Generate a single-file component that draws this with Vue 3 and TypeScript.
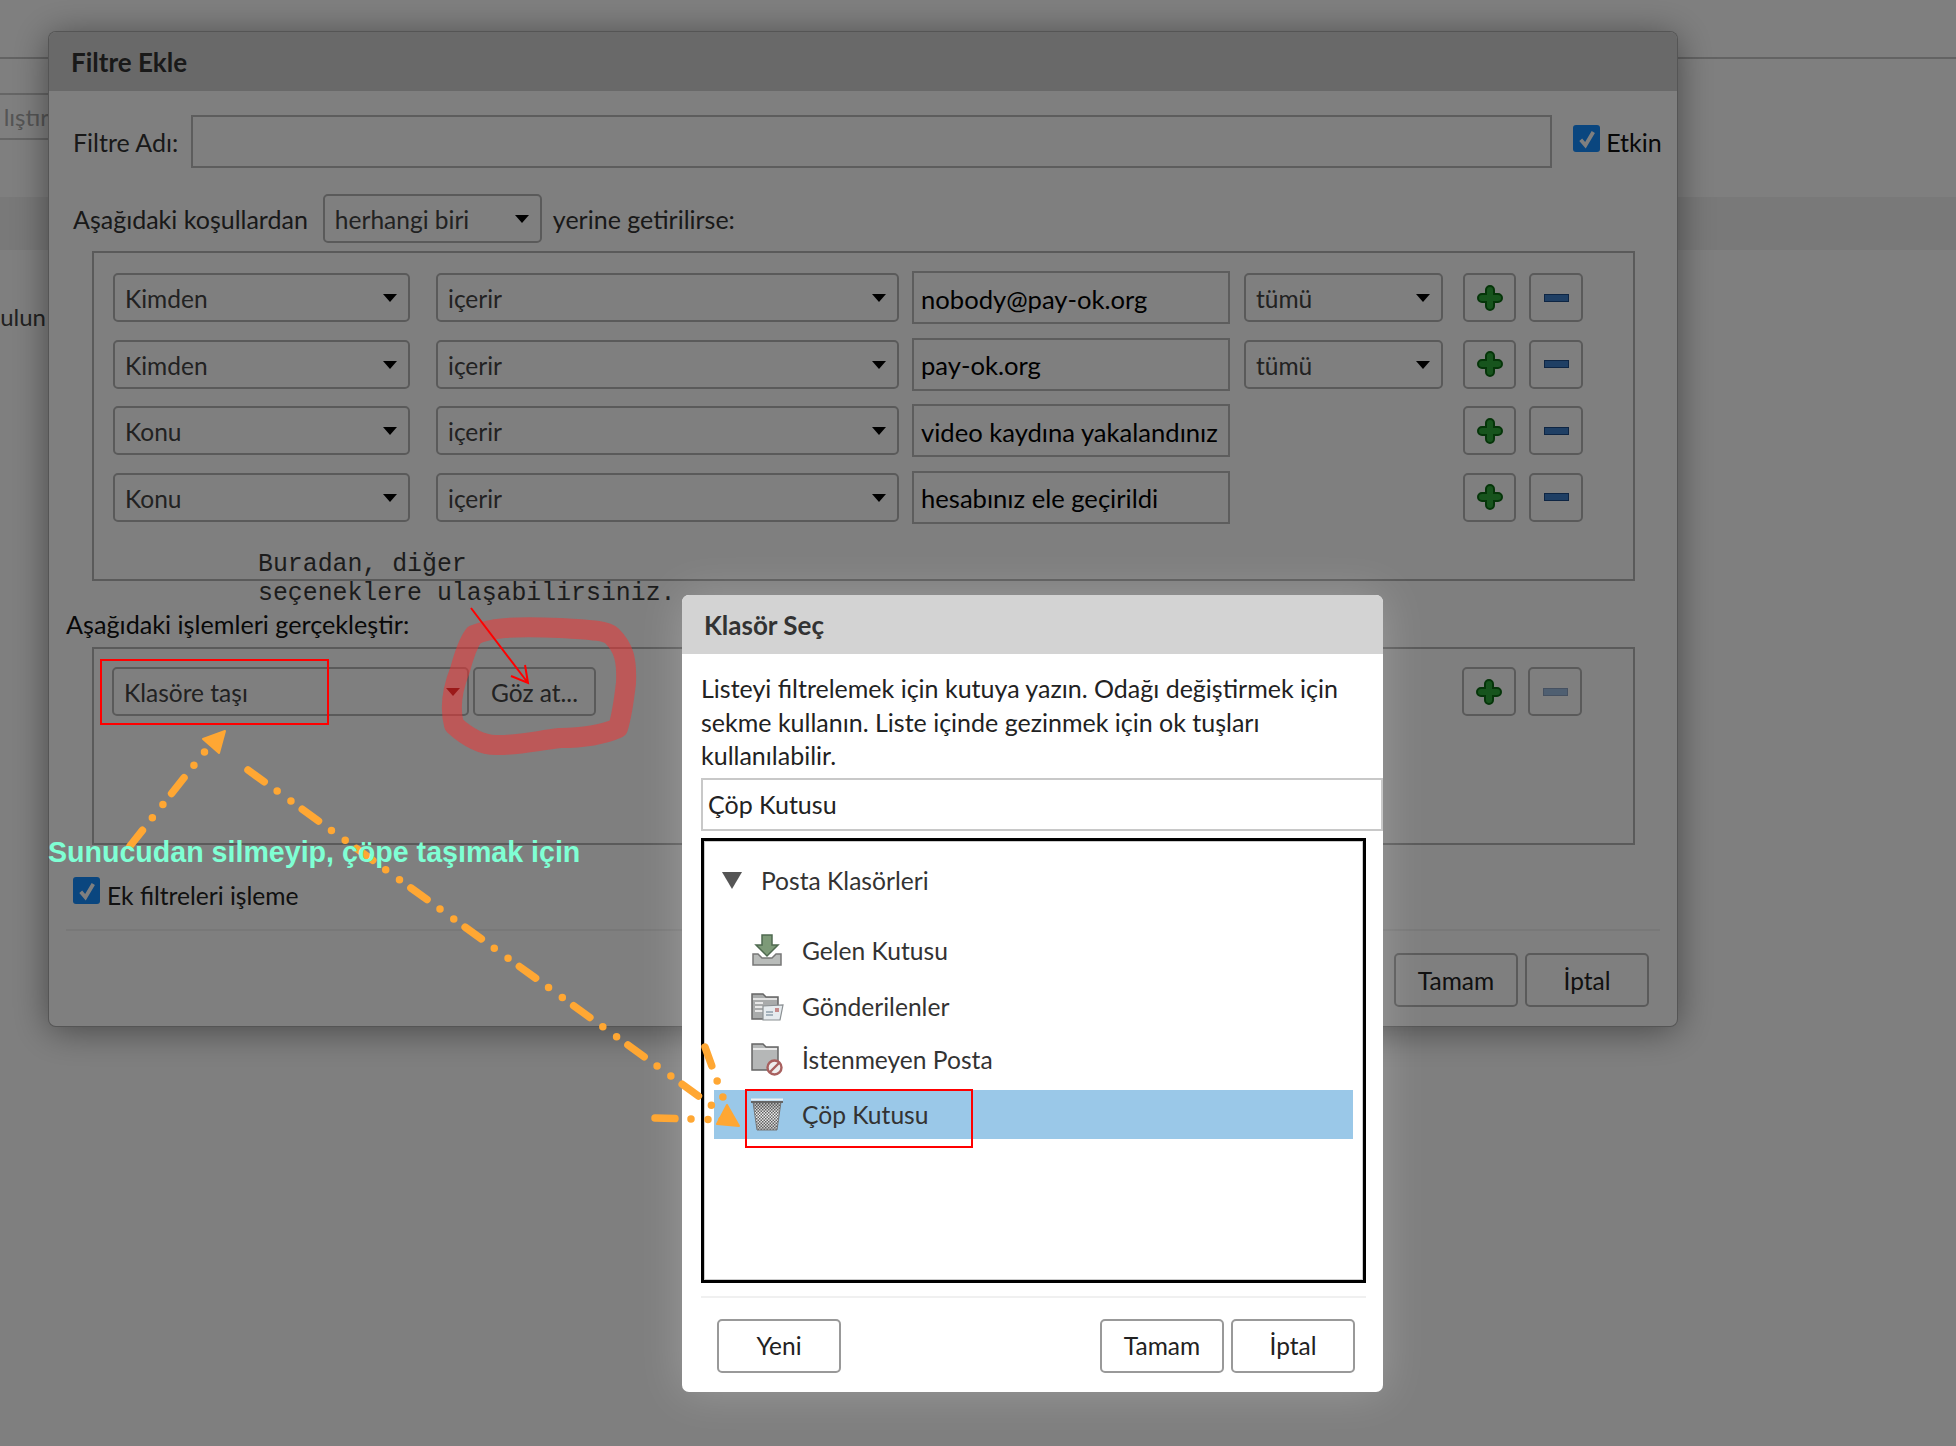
<script setup lang="ts">
const rows = [
  { field: "Kimden", op: "içerir", value: "nobody@pay-ok.org", scope: "tümü" },
  { field: "Kimden", op: "içerir", value: "pay-ok.org", scope: "tümü" },
  { field: "Konu", op: "içerir", value: "video kaydına yakalandınız", scope: "" },
  { field: "Konu", op: "içerir", value: "hesabınız ele geçirildi", scope: "" },
];

const folders = [
  { name: "Gelen Kutusu", icon: "inbox" },
  { name: "Gönderilenler", icon: "sent" },
  { name: "İstenmeyen Posta", icon: "junk" },
  { name: "Çöp Kutusu", icon: "trash" },
];
</script>

<template>
  <div class="page">
    <!-- arka plan -->
    <div class="bg-tabs"></div>
    <div class="bg-tools">
      <div class="bg-btn">lıştır</div>
    </div>
    <div class="bg-band"></div>
    <div class="bg-text">ulun</div>

    <!-- filtre penceresi -->
    <div class="filter-dialog">
      <div class="dlg-head">Filtre Ekle</div>

      <div class="name-row">
        <span>Filtre Adı:</span>
        <div class="text-box name-input"></div>
        <span class="check">
          <svg viewBox="0 0 14 14"><path d="M3 7.5 6 11 11 2.5" /></svg>
        </span>
        <span class="etkin">Etkin</span>
      </div>

      <div class="match-row">
        <span class="match-label">Aşağıdaki koşullardan</span>
        <div class="select match-select">herhangi biri<i class="caret"></i></div>
        <span>yerine getirilirse:</span>
      </div>

      <div class="group conditions">
        <div v-for="(row, i) in rows" :key="i" class="cond-row">
          <div class="select">{{ row.field }}<i class="caret"></i></div>
          <div class="select">{{ row.op }}<i class="caret"></i></div>
          <div class="text-box value">{{ row.value }}</div>
          <div v-if="row.scope" class="select">{{ row.scope }}<i class="caret"></i></div>
          <div v-else></div>
          <div class="select icon-btn">
            <svg class="plus" viewBox="0 0 26 26">
              <path class="plus-out" d="M13 5v16M5 13h16" />
              <path class="plus-in" d="M13 5v16M5 13h16" />
            </svg>
          </div>
          <div class="select icon-btn"><i class="minus"></i></div>
        </div>
      </div>

      <div class="actions-label">Aşağıdaki işlemleri gerçekleştir:</div>
      <div class="group actions">
        <div class="action-row">
          <div class="select action-select">Klasöre taşı<i class="caret caret-red"></i></div>
          <div class="select browse">Göz at...</div>
          <div class="action-spacer"></div>
          <div class="select icon-btn">
            <svg class="plus" viewBox="0 0 26 26">
              <path class="plus-out" d="M13 5v16M5 13h16" />
              <path class="plus-in" d="M13 5v16M5 13h16" />
            </svg>
          </div>
          <div class="select icon-btn"><i class="minus minus-off"></i></div>
        </div>
      </div>

      <div class="stop-row">
        <span class="check">
          <svg viewBox="0 0 14 14"><path d="M3 7.5 6 11 11 2.5" /></svg>
        </span>
        <span class="stop-text">Ek filtreleri işleme</span>
      </div>

      <div class="dlg-sep"></div>
      <div class="dlg-buttons">
        <div class="btn">Tamam</div>
        <div class="btn">İptal</div>
      </div>
    </div>

    <div class="dim"></div>

    <!-- klasör seçimi -->
    <div class="folder-dialog">
      <div class="dlg-head folder-head">Klasör Seç</div>
      <p class="hint">
        Listeyi filtrelemek için kutuya yazın. Odağı değiştirmek için<br />
        sekme kullanın. Liste içinde gezinmek için ok tuşları<br />
        kullanılabilir.
      </p>
      <div class="search">Çöp Kutusu</div>
      <div class="tree">
        <div class="tree-root"><i class="tree-arrow"></i>Posta Klasörleri</div>
        <div class="tree-list">
          <div
            v-for="f in folders"
            :key="f.name"
            class="tree-item"
            :class="{ selected: f.icon === 'trash' }"
          >
            <svg v-if="f.icon === 'inbox'" class="folder-icon" viewBox="0 0 34 34">
              <path d="M12 2h10v10h6L17 23 6 12h6z" fill="#7d9a78" stroke="#4f6a50" stroke-width="1.5" />
              <path d="M3 21h5l4 4h10l4-4h5v11H3z" fill="#b9bcba" stroke="#777" stroke-width="1.5" />
            </svg>
            <svg v-else-if="f.icon === 'sent'" class="folder-icon" viewBox="0 0 34 34">
              <path d="M2 4h11l3 3h12v22H2z" fill="#a9abab" stroke="#666" stroke-width="1.5" />
              <path d="M3 9h24" stroke="#e2e2e2" stroke-width="2" />
              <path d="M5 13h8M5 17h8M5 21h8" stroke="#e8e8e8" stroke-width="2" />
              <path d="M13 16l20-1-3 15H13z" fill="#e6ebee" stroke="#8a8f92" stroke-width="1.2" />
              <path d="M16 22h7M16 25h7" stroke="#8fa0ac" stroke-width="1.5" />
              <rect x="25" y="18" width="4" height="4" fill="#c58a8a" />
            </svg>
            <svg v-else-if="f.icon === 'junk'" class="folder-icon" viewBox="0 0 34 34">
              <path d="M2 2h11l3 3h12v23H2z" fill="#b5b7b7" stroke="#666" stroke-width="1.5" />
              <path d="M3 7h24" stroke="#e8e8e8" stroke-width="2" />
              <circle cx="24.5" cy="25.5" r="7" fill="#eee" stroke="#a8605f" stroke-width="2.4" />
              <path d="M20 30l9-9" stroke="#a8605f" stroke-width="2.4" />
            </svg>
            <svg v-else class="folder-icon" viewBox="0 0 34 34">
              <defs>
                <pattern id="mesh" width="3" height="3" patternUnits="userSpaceOnUse">
                  <rect width="3" height="3" fill="#f4f4f4" />
                  <rect width="1.5" height="1.5" fill="#666" />
                  <rect x="1.5" y="1.5" width="1.5" height="1.5" fill="#666" />
                </pattern>
                <linearGradient id="binshade" x1="0" y1="0" x2="0" y2="1">
                  <stop offset="0" stop-color="#333" stop-opacity="0.35" />
                  <stop offset="0.45" stop-color="#333" stop-opacity="0" />
                  <stop offset="1" stop-color="#333" stop-opacity="0.2" />
                </linearGradient>
              </defs>
              <path d="M3 5h28l-4 28H7z" fill="url(#mesh)" />
              <path d="M3 5h28l-4 28H7z" fill="url(#binshade)" stroke="#777" stroke-width="1" />
              <path d="M1 2.5h32" stroke="#f2f2f2" stroke-width="2" />
              <path d="M1 5h32" stroke="#666" stroke-width="2" />
            </svg>
            <span>{{ f.name }}</span>
          </div>
        </div>
      </div>
      <div class="folder-sep"></div>
      <div class="folder-buttons">
        <div class="btn light">Yeni</div>
        <div class="folder-spacer"></div>
        <div class="btn light">Tamam</div>
        <div class="btn light">İptal</div>
      </div>
    </div>

    <!-- ekran görüntüsü üzerindeki notlar -->
    <svg class="marks" viewBox="0 0 1956 1446">
      <path
        class="blob"
        d="M474 635C490 628 510 626 560 628C590 630 605 630 612 636C624 648 627 660 626 683C624 700 622 715 618 728C600 736 580 738 560 738C530 742 510 746 496 745C480 745 465 735 454 725C450 710 452 690 460 670C464 655 468 643 474 635Z"
      />
      <rect class="box" x="101" y="660" width="227" height="64" />
      <rect class="box" x="746" y="1090" width="226" height="57" />
      <path class="thin" d="M471 608 528 683M525 665 528 683 511 676" />

      <line class="dash" x1="130" y1="846" x2="206" y2="750" />
      <polygon class="head" points="203,739 225,731 219,753" />
      <line class="dash" x1="248" y1="770" x2="715" y2="1108" />
      <line class="dash" x1="705" y1="1047" x2="724" y2="1100" />
      <line class="dash" x1="655" y1="1118" x2="726" y2="1120" />
      <polygon class="head" points="727,1105 739,1126 717,1124" />
    </svg>

    <div class="note">Buradan, diğer<br />seçeneklere ulaşabilirsiniz.</div>
    <div class="teal-note">Sunucudan silmeyip, çöpe taşımak için</div>
  </div>
</template>

<style>
html,
body {
  margin: 0;
  background: #fff;
}
</style>

<style scoped>
.page {
  position: relative;
  width: 1956px;
  height: 1446px;
  overflow: hidden;
  background: #fff;
  font-family: Lato, "Noto Sans", sans-serif;
  font-size: 25px;
  color: #333;
}

.bg-tabs {
  height: 59px;
  border-bottom: 2px solid #c6c6c6;
  box-sizing: border-box;
}

.bg-tools {
  padding-top: 34px;
}

.bg-btn {
  width: 49px;
  height: 47px;
  box-sizing: border-box;
  display: flex;
  justify-content: flex-end;
  align-items: center;
  border-top: 2px solid #ccc;
  border-bottom: 2px solid #ccc;
  font-size: 24px;
  color: #aaa;
}

.bg-band {
  height: 53px;
  margin-top: 57px;
  background: #f2f2f2;
}

.bg-text {
  width: 46px;
  margin-top: 50px;
  text-align: right;
  font-size: 24px;
  line-height: 34px;
  color: #444;
}

.filter-dialog {
  position: absolute;
  left: 49px;
  top: 32px;
  width: 1628px;
  height: 994px;
  box-sizing: border-box;
  background: #fff;
  border-radius: 7px;
  box-shadow: 0 0 0 1px #aaa, 0 4px 36px rgba(0, 0, 0, 0.45);
}

.dlg-head {
  height: 59px;
  display: flex;
  align-items: center;
  padding-left: 22px;
  background: #d3d3d3;
  border-radius: 7px 7px 0 0;
  font-size: 26px;
  font-weight: 700;
  color: #333;
}

.name-row {
  display: flex;
  align-items: center;
  margin: 24px 0 0 24px;
  height: 53px;
}

.name-input {
  width: 1361px;
  height: 53px;
  margin-left: 13px;
}

.text-box {
  box-sizing: border-box;
  border: 2px solid #bbb;
  padding-left: 7px;
  display: flex;
  align-items: center;
  color: #000;
}

.check {
  flex: none;
  width: 27px;
  height: 27px;
  border-radius: 3px;
  background: #148cff;
  display: flex;
  align-items: center;
  justify-content: center;
}

.check svg {
  width: 22px;
  height: 22px;
  fill: none;
  stroke: #fff;
  stroke-width: 2.4;
}

.name-row .check {
  margin: -6px 0 0 21px;
}

.etkin {
  margin-left: 6px;
  color: #111;
}

.match-row {
  display: flex;
  align-items: center;
  gap: 11px;
  margin: 26px 0 0 24px;
  height: 49px;
}

.match-label {
  margin-right: 4px;
}

.select {
  position: relative;
  box-sizing: border-box;
  height: 49px;
  display: flex;
  align-items: center;
  padding: 2px 0 0 10px;
  border: 2px solid #b5b5b5;
  border-radius: 5px;
  font-size: 24.5px;
  color: #444;
}

.match-select {
  width: 219px;
}

.caret {
  position: absolute;
  right: 11px;
  top: 19px;
  border-left: 7px solid transparent;
  border-right: 7px solid transparent;
  border-top: 8px solid #000;
}

.caret-red {
  right: 7px;
  border-top-color: #7a0000;
}

.group {
  box-sizing: border-box;
  margin-left: 43px;
  width: 1543px;
  border: 2px solid #b5b5b5;
}

.conditions {
  margin-top: 8px;
  height: 330px;
  padding: 20px 0 0 19px;
  display: grid;
  grid-template-rows: repeat(4, 49px);
  row-gap: 17.67px;
}

.cond-row {
  display: grid;
  grid-template-columns: 297px 476px 318px 200px 60px 54px;
  column-gap: 13px;
  height: 49px;
}

.cond-row > :nth-child(2) {
  margin-left: 13px;
}

.cond-row > .value {
  height: 53px;
  margin-top: -2px;
  padding-top: 2px;
  font-size: 25.6px;
}

.cond-row > :nth-child(4) {
  margin-left: 1px;
}

.cond-row > :nth-child(5) {
  margin-left: 7px;
}

.icon-btn {
  padding: 0;
  justify-content: center;
}

.plus {
  display: block;
  width: 26px;
  height: 26px;
  fill: none;
  stroke-linecap: round;
}

.plus-out {
  stroke: #0a6a12;
  stroke-width: 10;
}

.plus-in {
  stroke: #2ea83a;
  stroke-width: 6;
}

.minus {
  display: block;
  width: 25px;
  height: 8px;
  box-sizing: border-box;
  border: 1px solid #1c4a86;
  background: #3f7fc8;
}

.minus-off {
  opacity: 0.5;
}

.actions-label {
  margin: 26px 0 6px 17px;
  font-size: 25.2px;
  line-height: 34px;
  color: #111;
}

.actions {
  height: 198px;
  padding: 18px 0 0 18px;
}

.action-row {
  display: flex;
  gap: 4px;
}

.action-select {
  width: 357px;
}

.browse {
  width: 123px;
  justify-content: center;
  padding: 2px 0 0;
}

.action-spacer {
  width: 850px;
}

.action-row .icon-btn {
  width: 54px;
  margin-left: 8px;
}

.stop-row {
  display: flex;
  margin: 32px 0 0 24px;
  height: 27px;
  font-size: 24.6px;
}

.stop-text {
  margin: 2px 0 0 7px;
  line-height: 34px;
  color: #222;
}

.dlg-sep {
  height: 2px;
  margin: 25px 17px 0 17px;
  background: #f0f0f0;
}

.dlg-buttons {
  display: flex;
  justify-content: flex-end;
  gap: 7px;
  margin: 22px 28px 0 0;
}

.btn {
  box-sizing: border-box;
  width: 124px;
  height: 54px;
  display: flex;
  align-items: center;
  justify-content: center;
  border: 2px solid #b5b5b5;
  border-radius: 5px;
  font-size: 24.5px;
  color: #222;
}

.dim {
  position: absolute;
  inset: 0;
  background: rgba(0, 0, 0, 0.5);
}

.folder-dialog {
  position: absolute;
  left: 682px;
  top: 595px;
  width: 701px;
  height: 797px;
  background: #fff;
  border-radius: 7px;
  box-shadow: 0 0 44px rgba(255, 255, 255, 0.22);
}

.hint {
  margin: 18px 0 0 19px;
  line-height: 33.5px;
  color: #222;
}

.search {
  box-sizing: border-box;
  height: 53px;
  margin: 5px 0 0 19px;
  padding-left: 5px;
  display: flex;
  align-items: center;
  border: 2px solid #c8c8c8;
  color: #222;
}

.tree {
  box-sizing: border-box;
  width: 665px;
  height: 445px;
  margin: 7px 0 0 19px;
  border: 3px solid #000;
  box-shadow: inset 0 0 0 1px #ccc;
  padding: 1px 10px 0;
  font-size: 24.6px;
}

.tree-root {
  display: flex;
  align-items: center;
  height: 78px;
  padding-left: 8px;
  margin-bottom: 2px;
  color: #333;
}

.tree-arrow {
  margin-right: 19px;
  border-left: 10px solid transparent;
  border-right: 10px solid transparent;
  border-top: 17px solid #555;
}

.tree-list {
  display: grid;
  grid-template-rows: 57px 56px 49px 55px;
}

.tree-item {
  display: flex;
  align-items: center;
  padding-left: 36px;
  color: #333;
}

.tree-item.selected {
  height: 49px;
  margin-top: 6px;
  background: #9ac8e8;
}

.folder-icon {
  flex: none;
  width: 34px;
  height: 34px;
  margin-right: 18px;
}

.folder-sep {
  height: 2px;
  margin: 13px 17px 0 19px;
  background: #f0f0f0;
}

.folder-buttons {
  display: flex;
  gap: 7px;
  margin: 21px 28px 0 35px;
}

.folder-spacer {
  flex: 1;
}

.btn.light {
  border-color: #999;
}

.marks {
  position: absolute;
  inset: 0;
  width: 1956px;
  height: 1446px;
}

.blob {
  fill: none;
  stroke: rgba(250, 50, 50, 0.5);
  stroke-width: 20;
  stroke-linejoin: round;
}

.box {
  fill: none;
  stroke: #f00;
  stroke-width: 2;
}

.thin {
  fill: none;
  stroke: #f00;
  stroke-width: 2;
}

.dash {
  stroke: #ffa733;
  stroke-width: 7.5;
  stroke-linecap: round;
  stroke-dasharray: 20 16 0 17 0 14;
}

.head {
  fill: #ffa733;
  stroke: #ffa733;
  stroke-width: 2;
  stroke-linejoin: round;
}

.note {
  position: absolute;
  left: 258px;
  top: 550px;
  font-family: "Liberation Mono", monospace;
  font-size: 24.85px;
  line-height: 29px;
  color: #1c1c1c;
  white-space: nowrap;
}

.teal-note {
  position: absolute;
  left: 48px;
  top: 834px;
  font-family: "Liberation Sans", Arial, sans-serif;
  font-weight: 700;
  font-size: 28.6px;
  line-height: 36px;
  color: #7fffd4;
  white-space: nowrap;
}
</style>
